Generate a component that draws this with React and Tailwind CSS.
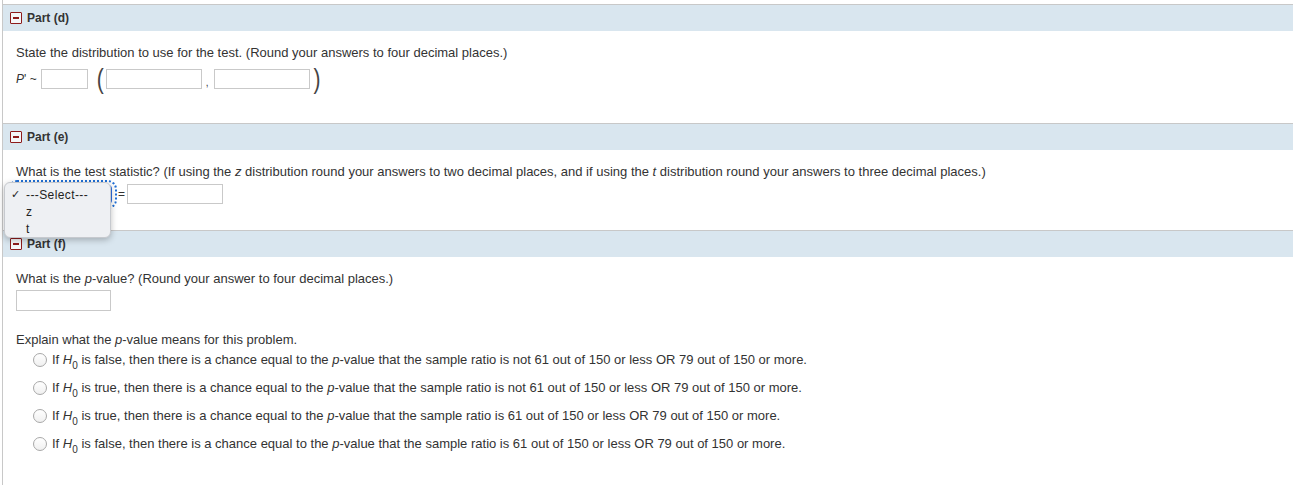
import React from "react";

const font = { fontFamily: '"Liberation Sans", Arial, sans-serif' };

function PartHeader({ label }) {
  return (
    <div className="h-[27px] border-t border-[#c8c8c8] bg-[#d9e6ef] flex items-center pl-[7px]">
      <span className="w-[12px] h-[12px] border border-[#8e1b1b] rounded-[1px] bg-[#f4f6f8] flex items-center justify-center">
        <span className="block w-[6px] h-[1.5px] bg-[#8e1b1b]" />
      </span>
      <span className="ml-[5px] text-[12px] font-bold text-[#333]">{label}</span>
    </div>
  );
}

function Box({ w, h = "h-[20px]" }) {
  return <span className={`block ${w} ${h} border border-[#c9c9c9] bg-white`} />;
}

function Paren({ children }) {
  return (
    <span className="inline-block text-[21px] leading-none text-[#444] scale-y-[1.35] origin-center">
      {children}
    </span>
  );
}

const H0 = () => (
  <>
    <i>H</i>
    <sub className="text-[10px] align-[-3px] leading-none">0</sub>
  </>
);

const options = [
  ["false", "not "],
  ["true", "not "],
  ["true", ""],
  ["false", ""],
];

export default function App() {
  return (
    <div style={font} className="w-[1293px] h-[485px] overflow-hidden bg-white text-[13px] text-[#333]">
      <div className="ml-[2px] h-full border-l border-[#c8c8c8] pt-[4px]">
        {/* Part (d) */}
        <PartHeader label="Part (d)" />
        <div className="pl-[13px] pt-[14px] pb-[31px]">
          <p className="leading-[16px]">
            State the distribution to use for the test. (Round your answers to four decimal places.)
          </p>
          <div className="mt-[5px] h-[26px] flex items-center">
            <span className="text-[12px]">
              <i>P</i>' ~
            </span>
            <span className="ml-[4px]"><Box w="w-[47px]" /></span>
            <span className="ml-[9px]"><Paren>(</Paren></span>
            <span className="ml-[2px]"><Box w="w-[96px]" /></span>
            <span className="ml-[4px] mt-[6px] text-[10px]">,</span>
            <span className="ml-[6px]"><Box w="w-[96px]" /></span>
            <span className="ml-[3px]"><Paren>)</Paren></span>
          </div>
        </div>

        {/* Part (e) */}
        <PartHeader label="Part (e)" />
        <div className="relative pl-[13px] pt-[14px] pb-[26px]">
          <p className="leading-[16px]">
            What is the test statistic? (If using the <i>z</i> distribution round your answers to two decimal places, and if using the <i>t</i> distribution round your answers to three decimal places.)
          </p>
          <div className="mt-[4px] h-[20px] flex items-center">
            <span className="relative w-[99px] h-[19px] ml-[-3px] rounded-[4px] bg-[#2f6fe0] outline-2 outline-dotted outline-[#1f6fd6] outline-offset-[3px]" />
            <span className="ml-[6px] text-[12px]">=</span>
            <span className="ml-[2px]"><Box w="w-[96px]" /></span>
          </div>

          {/* open select menu */}
          <div className="absolute left-[1px] top-[32px] z-10 w-[107px] h-[56px] rounded-[6px] border border-[#c6c9ce] bg-[#eef0f3] shadow-[0_2px_6px_rgba(0,0,0,0.25)] text-[12px] text-[#222] pt-[3px]">
            <div className="h-[17px] flex items-center">
              <span className="w-[21px] pl-[6px] text-[11px]">✓</span>
              <span className="tracking-[0.4px]">---Select---</span>
            </div>
            <div className="h-[17px] flex items-center pl-[21px]">z</div>
            <div className="h-[17px] flex items-center pl-[21px]">t</div>
          </div>
        </div>

        {/* Part (f) */}
        <PartHeader label="Part (f)" />
        <div className="pl-[13px] pt-[14px]">
          <p className="leading-[16px]">
            What is the <i>p</i>-value? (Round your answer to four decimal places.)
          </p>
          <div className="mt-[3px] flex">
            <Box w="w-[95px]" h="h-[21px]" />
          </div>
          <p className="mt-[21px] leading-[16px]">Explain what the <i>p</i>-value means for this problem.</p>
          <div className="flex flex-col gap-[4px]">
            {options.map(([tf, not], i) => (
              <label key={i} className="h-[24px] flex items-center ml-[17px]">
                <span className="w-[14px] h-[14px] rounded-full border border-[#a8a8a8] bg-gradient-to-b from-white to-[#f0f0f0]" />
                <span className="ml-[5px] leading-[16px]">
                  If <H0 /> is {tf}, then there is a chance equal to the <i>p</i>-value that the sample ratio is {not}61 out of 150 or less OR 79 out of 150 or more.
                </span>
              </label>
            ))}
          </div>
        </div>
      </div>
    </div>
  );
}
